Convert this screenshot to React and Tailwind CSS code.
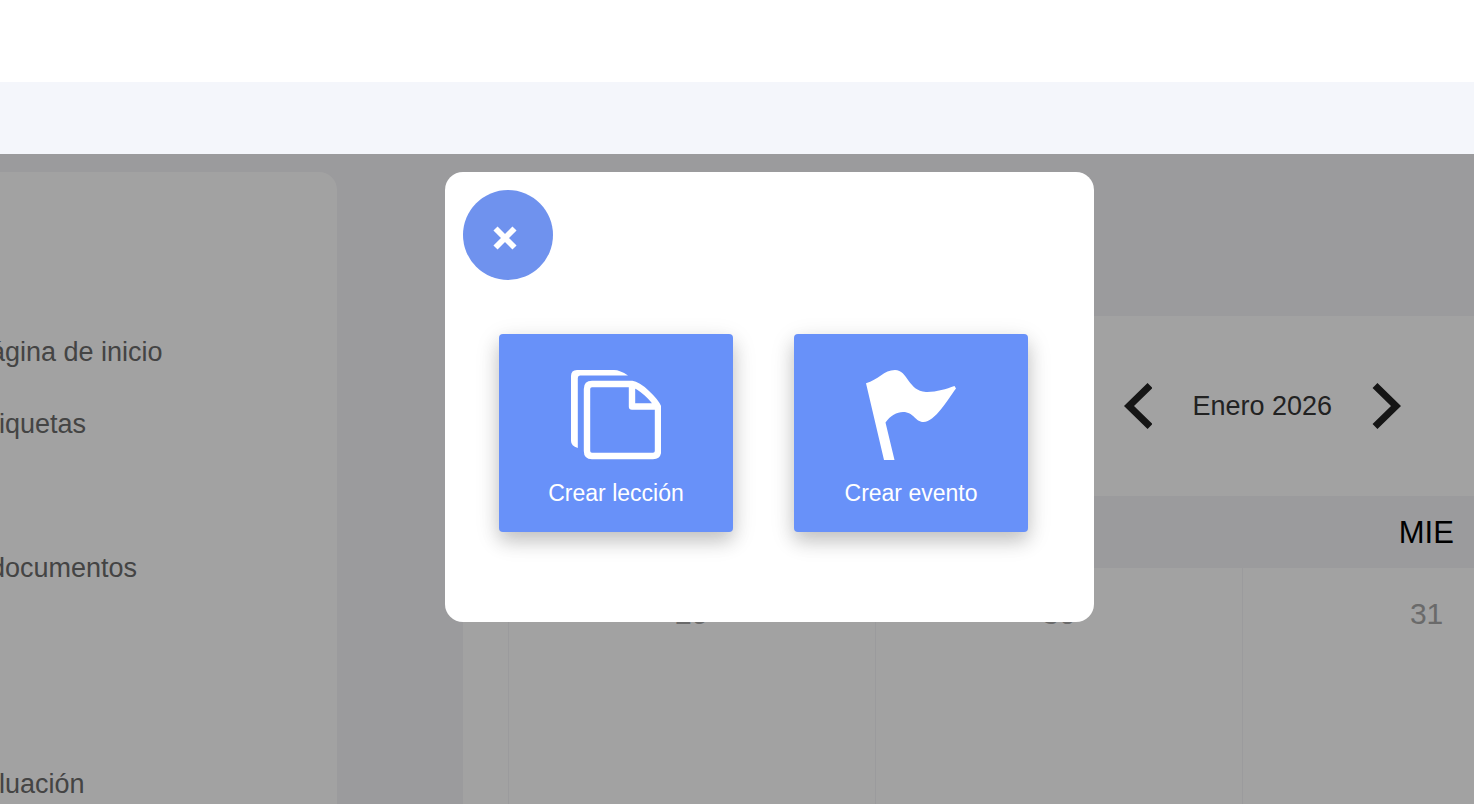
import React, { useState } from 'react';

// One entry per 72px row, empty rows keep their height
const menuRows = ['ágina de inicio', 'iquetas', '', 'documentos', '', '', 'luación'];

const weekDays = ['', '', 'MIE'];
const days = ['29', '30', '31'];

function PagesIcon() {
  return (
    <svg width="90" height="90" viewBox="0 0 90 90" fill="none" aria-hidden="true">
      <path d="M6 0H43Q49 0 57 5.5H9Q6.8 5.5 6.8 8V78Q0 76 0 71V6Q0 0 6 0Z" fill="white" />
      <path
        d="M61 14H21Q16 14 16 19V81Q16 86 21 86H82Q87 86 87 81V37C84 30 69 15 61 14V36.5H87"
        stroke="white"
        strokeWidth="6.4"
        strokeLinejoin="round"
      />
    </svg>
  );
}

function FlagIcon() {
  return (
    <svg width="90" height="90" viewBox="0 0 90 90" aria-hidden="true">
      <path
        d="M0 13.3C12 10 18 0 29 0C42 0 42 21 60 22C70 22.3 80 19 88.5 16L90 18.5C82 29 69 52 57.5 52C49 52 48 42 37 42C31 42 24 46 19.5 52.5L28.5 90H18Z"
        fill="white"
      />
    </svg>
  );
}

function Chevron({ points }) {
  return (
    <svg width="29" height="46" viewBox="0 0 29 46" fill="none" aria-hidden="true">
      <polyline points={points} stroke="#212121" strokeWidth="7" />
    </svg>
  );
}

function ActionButton({ icon, label }) {
  return (
    <button
      type="button"
      className="flex h-[198px] w-[234px] flex-col items-center rounded bg-[#6891f9] pt-9 text-[23px] leading-9 text-white shadow-[0_9px_18px_rgba(0,0,0,0.16),0_7px_27px_rgba(0,0,0,0.12)]"
    >
      {icon}
      <span className="mt-[15px]">{label}</span>
    </button>
  );
}

export default function App() {
  const [open, setOpen] = useState(true);

  return (
    <div className="flex h-screen flex-col overflow-hidden bg-white font-['Liberation_Sans',Arial,sans-serif]">
      <header className="h-[82px] shrink-0 bg-white" />
      <div className="h-[72px] shrink-0 bg-[#f4f6fb]" />

      <div className="relative flex min-h-0 flex-1 overflow-hidden bg-[#f4f4f7] pt-[18px]">
        {/* Sidebar */}
        <aside className="w-[337px] shrink-0 overflow-hidden rounded-tr-[18px] bg-white pt-36">
          <ul>
            {menuRows.map((label, i) => (
              <li key={i} className="h-[72px] text-[27px] leading-[72px] text-[#6b6b6b]">
                {label && (
                  <a href="#" className={label.length > 7 ? '-ml-2.5' : '-ml-px'}>
                    {label}
                  </a>
                )}
              </li>
            ))}
          </ul>
        </aside>

        {/* Calendar */}
        <main className="mt-36 ml-[126px] flex min-w-0 flex-1 flex-col overflow-hidden bg-white">
          <div className="flex h-[180px] shrink-0 items-center justify-end gap-10 pr-[73px]">
            <button type="button" aria-label="Mes anterior">
              <Chevron points="27,2.5 6,23 27,43.5" />
            </button>
            <h2 className="text-[27px] leading-9 text-[#363636]">Enero 2026</h2>
            <button type="button" aria-label="Mes siguiente">
              <Chevron points="3,2.5 24,23 3,43.5" />
            </button>
          </div>

          <table className="w-[1147px] flex-1 table-fixed border-collapse">
            <colgroup>
              <col className="w-[45px]" />
              <col />
              <col />
              <col />
            </colgroup>
            <thead className="bg-[#f4f4f7]">
              <tr className="h-[72px]">
                <td />
                {weekDays.map((day, i) => (
                  <th key={i} className="p-0 pt-0.5 text-[31px] font-normal text-black">
                    {day}
                  </th>
                ))}
              </tr>
            </thead>
            <tbody>
              <tr className="h-[360px]">
                <td />
                {days.map((day) => (
                  <td
                    key={day}
                    className="border-l border-[#f4f4f7] p-0 pt-7 text-center align-top text-[30px] leading-9 text-[#a7a7a7]"
                  >
                    {day}
                  </td>
                ))}
              </tr>
            </tbody>
          </table>
        </main>

        {/* Create dialog */}
        {open && (
          <div className="absolute inset-0 flex items-start justify-center bg-black/[0.365] pt-[18px] pl-[65px]">
            <div role="dialog" aria-modal="true" className="h-[450px] w-[649px] rounded-[18px] bg-white p-[18px]">
              <button
                type="button"
                aria-label="Cerrar"
                onClick={() => setOpen(false)}
                className="flex size-[90px] items-center justify-center rounded-full bg-[#6f92ee] pt-1.5 pr-1.5"
              >
                <svg width="24" height="24" viewBox="0 0 24 24" fill="none" aria-hidden="true">
                  <path d="M2.5 2.5L21.5 21.5M21.5 2.5L2.5 21.5" stroke="white" strokeWidth="5.8" />
                </svg>
              </button>
              <div className="mt-[54px] flex gap-[61px] pl-9">
                <ActionButton icon={<PagesIcon />} label="Crear lección" />
                <ActionButton icon={<FlagIcon />} label="Crear evento" />
              </div>
            </div>
          </div>
        )}
      </div>
    </div>
  );
}
